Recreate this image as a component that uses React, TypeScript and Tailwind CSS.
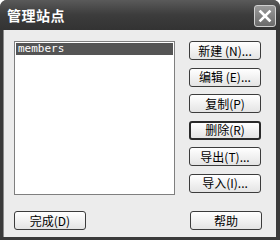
import React from 'react';

const font = { fontFamily: '"Noto Sans CJK SC", "DejaVu Sans", sans-serif' };

function Btn({ label, strong = false }: { label: string; strong?: boolean }) {
  return (
    <button
      className={
        'w-[72px] h-[19px] rounded-[3px] bg-gradient-to-b from-white to-[#e4e4e4] text-[12px] leading-none text-black flex items-center justify-center ' +
        (strong ? 'border-2 border-[#2a2a2a]' : 'border border-[#3c3c3c]')
      }
      style={font}
    >
      {label}
    </button>
  );
}

export default function App() {
  return (
    <div className="w-[280px] h-[240px] bg-[#3a3a3a] rounded-t-[7px] flex flex-col overflow-hidden" style={font}>
      {/* Title bar */}
      <div className="h-[30px] flex items-center justify-between pl-[7px] pr-[4px] bg-gradient-to-b from-[#5a5a5a] via-[#3c3c3c] to-[#333333]">
        <span className="text-white font-bold text-[14px] leading-none tracking-[0.5px]">管理站点</span>
        <div className="w-[22px] h-[22px] rounded-[3px] border border-[#d0d0d0] bg-gradient-to-b from-[#9a9a9a] to-[#6a6a6a] flex items-center justify-center mt-[1px]">
          <svg width="14" height="14" viewBox="0 0 14 14">
            <path d="M2.5 2.5 L11.5 11.5 M11.5 2.5 L2.5 11.5" stroke="white" strokeWidth="2.6" strokeLinecap="square" />
          </svg>
        </div>
      </div>

      {/* Body */}
      <div className="flex-1 ml-[3px] mr-[4px] mb-[3px] bg-[#ececec] border-l border-[#8a8a8a] pt-[11px] pl-[10px] flex flex-col">
        <div className="flex">
          <div className="w-[161px] h-[154px] bg-white border border-[#7f7f7f] p-[1px]">
            <div
              className="h-[12px] bg-[#555555] text-white text-[11px] leading-[12px] pl-[2px]"
              style={{ fontFamily: '"DejaVu Sans Mono", "Liberation Mono", monospace' }}
            >
              members
            </div>
          </div>
          <div className="ml-[14px] flex flex-col gap-[7.5px]">
            <Btn label="新建 (N)..." />
            <Btn label="编辑 (E)..." />
            <Btn label="复制(P)" />
            <Btn label="删除(R)" strong />
            <Btn label="导出(T)..." />
            <Btn label="导入(I)..." />
          </div>
        </div>
        <div className="mt-[16px] flex justify-between pr-[14px]">
          <Btn label="完成(D)" />
          <Btn label="帮助" />
        </div>
      </div>
    </div>
  );
}
